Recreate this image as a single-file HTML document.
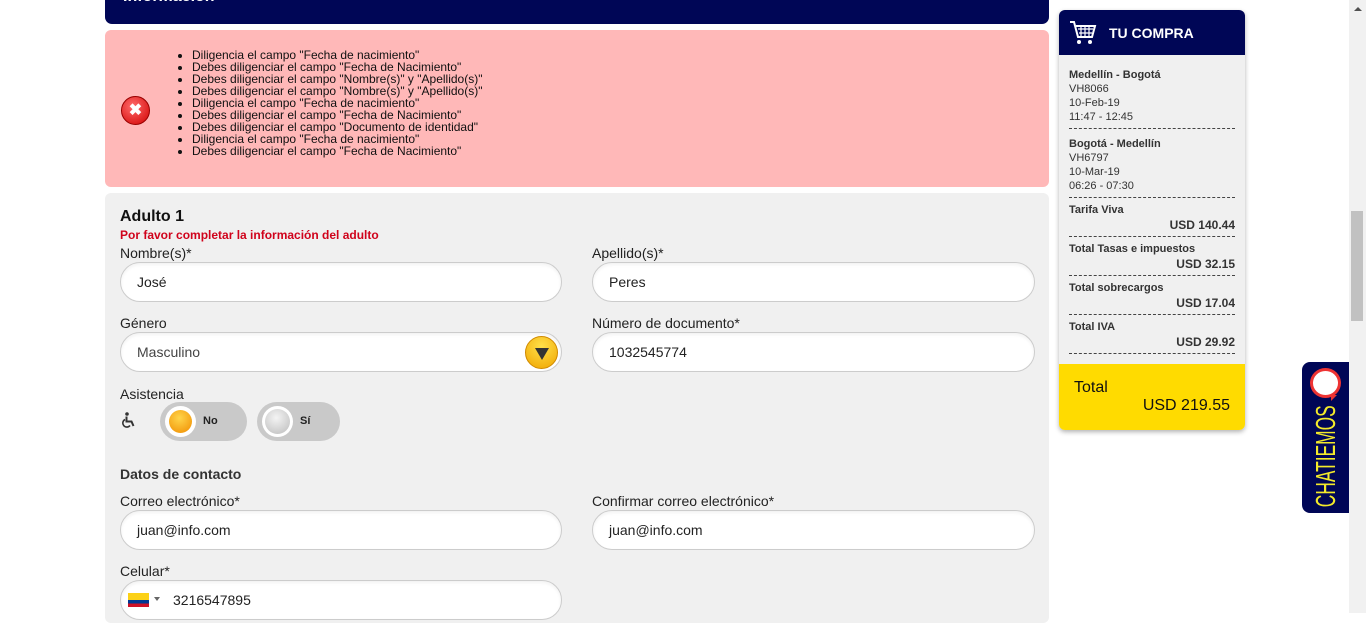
<!DOCTYPE html>
<html><head><meta charset="utf-8"><style>
*{box-sizing:border-box;margin:0;padding:0}
body{width:1366px;height:613px;overflow:hidden;background:#fff;font-family:"Liberation Sans",Arial,sans-serif;position:relative;color:#222}
.abs{position:absolute}
.hdr{left:105px;top:-10px;width:944px;height:34px;background:#000656;border-radius:0 0 7px 7px}
.err{left:105px;top:30px;width:944px;height:157px;background:#ffb8b8;border-radius:6px}
.err ul{position:absolute;left:87px;top:19px;font-size:12px;line-height:12px;color:#111}
.panel{left:105px;top:193px;width:944px;height:430px;background:#f0f0f0;border-radius:6px}
.lbl{font-size:14px;color:#222}
.inp{height:40px;border:1px solid #ccc;border-radius:20px;background:#fff;font-size:14px;line-height:38px;padding-left:16px;color:#222;box-shadow:inset 0 2px 3px rgba(0,0,0,.05)}
.side{left:1059px;top:10px;width:186px;height:420px;background:#f0f0f0;border-radius:6px;box-shadow:0 2px 5px rgba(0,0,0,.3);overflow:hidden}
.side .top{height:45px;background:#000656;color:#fff;font-weight:bold;font-size:14px}
.it{position:absolute;left:10px;width:166px;font-size:11px;color:#333;border-bottom:1px dashed #444}
.it b{color:#333}
.tog{height:39px;border-radius:20px;background:#c9c9c9}
</style></head><body>
<div class="abs hdr"><div class="abs" style="left:18px;top:0;color:#fff;font-weight:bold;font-size:16px;line-height:14px">Información</div></div>
<div class="abs err">
<div class="abs" style="left:16px;top:66px;width:29px;height:29px;border-radius:50%;background:radial-gradient(circle at 40% 35%,#ff6b6b,#d10000);border:1px solid #900;color:#fff;font-weight:bold;font-size:16px;text-align:center;line-height:27px">✖</div>
<ul>
<li>Diligencia el campo "Fecha de nacimiento"</li>
<li>Debes diligenciar el campo "Fecha de Nacimiento"</li>
<li>Debes diligenciar el campo "Nombre(s)" y "Apellido(s)"</li>
<li>Debes diligenciar el campo "Nombre(s)" y "Apellido(s)"</li>
<li>Diligencia el campo "Fecha de nacimiento"</li>
<li>Debes diligenciar el campo "Fecha de Nacimiento"</li>
<li>Debes diligenciar el campo "Documento de identidad"</li>
<li>Diligencia el campo "Fecha de nacimiento"</li>
<li>Debes diligenciar el campo "Fecha de Nacimiento"</li>
</ul></div>
<div class="abs panel"></div>
<div class="abs" style="left:120px;top:208px;font-size:16px;font-weight:bold;color:#111">Adulto 1</div>
<div class="abs" style="left:120px;top:228px;font-size:12px;font-weight:bold;color:#d0021b">Por favor completar la información del adulto</div>
<div class="abs lbl" style="left:120px;top:245px">Nombre(s)*</div>
<div class="abs lbl" style="left:592px;top:245px">Apellido(s)*</div>
<div class="abs inp" style="left:120px;top:262px;width:442px">José</div>
<div class="abs inp" style="left:592px;top:262px;width:443px">Peres</div>
<div class="abs lbl" style="left:120px;top:315px">Género</div>
<div class="abs lbl" style="left:592px;top:315px">Número de documento*</div>
<div class="abs inp" style="left:120px;top:332px;width:442px;color:#444">Masculino</div>
<div class="abs" style="left:525px;top:336px;width:33px;height:33px;border-radius:50%;background:radial-gradient(circle at 50% 30%,#ffe04a,#f0a500);border:1px solid #d08a00"><div class="abs" style="left:9px;top:11px;width:0;height:0;border-left:7px solid transparent;border-right:7px solid transparent;border-top:12px solid #333"></div></div>
<div class="abs inp" style="left:592px;top:332px;width:443px">1032545774</div>
<div class="abs lbl" style="left:120px;top:386px">Asistencia</div>
<svg class="abs" style="left:122px;top:412px" width="14" height="16" viewBox="0 0 14 16"><circle cx="5" cy="2" r="1.8" fill="#333"/><path d="M4.5 4.5v5h5l2 4.5" stroke="#333" stroke-width="2" fill="none"/><path d="M3 7.5a4 4 0 1 0 5 6" stroke="#333" stroke-width="1.6" fill="none"/></svg>
<div class="abs tog" style="left:160px;top:402px;width:87px"><div class="abs" style="left:5px;top:4px;width:31px;height:31px;border-radius:50%;background:#fff"><div class="abs" style="left:4px;top:4px;width:23px;height:23px;border-radius:50%;background:radial-gradient(circle at 45% 35%,#ffd54a,#f08c00)"></div></div><div class="abs" style="left:43px;top:13px;font-size:11px;font-weight:bold">No</div></div>
<div class="abs tog" style="left:257px;top:402px;width:83px"><div class="abs" style="left:5px;top:4px;width:31px;height:31px;border-radius:50%;background:#fff"><div class="abs" style="left:3px;top:3px;width:25px;height:25px;border-radius:50%;background:radial-gradient(circle at 45% 35%,#f4f4f4,#bbb)"></div></div><div class="abs" style="left:43px;top:13px;font-size:11px;font-weight:bold">Sí</div></div>
<div class="abs" style="left:120px;top:466px;font-size:14px;font-weight:bold;color:#333">Datos de contacto</div>
<div class="abs lbl" style="left:120px;top:493px">Correo electrónico*</div>
<div class="abs lbl" style="left:592px;top:493px">Confirmar correo electrónico*</div>
<div class="abs inp" style="left:120px;top:510px;width:442px">juan@info.com</div>
<div class="abs inp" style="left:592px;top:510px;width:443px">juan@info.com</div>
<div class="abs lbl" style="left:120px;top:563px">Celular*</div>
<div class="abs inp" style="left:120px;top:580px;width:442px;padding-left:52px">3216547895</div>
<div class="abs" style="left:128px;top:593px;width:21px;height:14px;background:linear-gradient(#fcd116 0 50%,#003893 50% 75%,#ce1126 75%)"></div>
<div class="abs" style="left:154px;top:597px;border-left:3px solid transparent;border-right:3px solid transparent;border-top:4px solid #666"></div>

<div class="abs side">
<div class="top"><svg class="abs" style="left:10px;top:9px" width="28" height="28" viewBox="0 0 28 28"><path d="M1 3h4l4 15h14l3-11H7" stroke="#fff" stroke-width="2" fill="none"/><path d="M9 10h15M10 14h13M12 7v11M16 7v11M20 7v11" stroke="#fff" stroke-width="1.2"/><circle cx="10" cy="23" r="2" fill="#fff"/><circle cx="21" cy="23" r="2" fill="#fff"/></svg><div class="abs" style="left:50px;top:15px">TU COMPRA</div></div>
<div class="it" style="top:58px;height:61px;line-height:14px"><b>Medellín - Bogotá</b><br>VH8066<br>10-Feb-19<br>11:47 - 12:45</div>
<div class="it" style="top:127px;height:61px;line-height:14px"><b>Bogotá - Medellín</b><br>VH6797<br>10-Mar-19<br>06:26 - 07:30</div>
<div class="it" style="top:194px;height:33px"><b>Tarifa Viva</b><div style="text-align:right;font-weight:bold;font-size:12px;margin-top:2px">USD 140.44</div></div>
<div class="it" style="top:233px;height:33px"><b>Total Tasas e impuestos</b><div style="text-align:right;font-weight:bold;font-size:12px;margin-top:2px">USD 32.15</div></div>
<div class="it" style="top:272px;height:33px"><b>Total sobrecargos</b><div style="text-align:right;font-weight:bold;font-size:12px;margin-top:2px">USD 17.04</div></div>
<div class="it" style="top:311px;height:33px"><b>Total IVA</b><div style="text-align:right;font-weight:bold;font-size:12px;margin-top:2px">USD 29.92</div></div>
<div class="abs" style="left:0;top:354px;width:186px;height:66px;background:#ffdb00"><div class="abs" style="left:15px;top:15px;font-size:16px;color:#111">Total</div><div class="abs" style="right:15px;top:33px;font-size:16px;color:#111">USD 219.55</div></div>
</div>

<div class="abs" style="left:1302px;top:362px;width:48px;height:151px;background:#000656;border-radius:8px 0 0 8px;overflow:hidden">
<div class="abs" style="left:8px;top:6px;width:31px;height:30px;border-radius:50%;background:#fff;border:3px solid #e33"></div>
<div class="abs" style="left:29px;top:33px;width:0;height:0;border-left:6px solid #e33;border-bottom:6px solid transparent"></div>
<div class="abs" style="left:-36px;top:93px;width:120px;height:30px;line-height:30px;transform:rotate(-90deg) scaleX(0.62);color:#f4ea2a;font-size:28px;text-align:center">CHATIEMOS</div></div>
<div class="abs" style="left:1349px;top:0;width:17px;height:613px;background:#f1f1f1"><div class="abs" style="left:2px;top:211px;width:12px;height:110px;background:#c1c1c1"></div><div class="abs" style="left:5px;top:7px;border-left:4px solid transparent;border-right:4px solid transparent;border-bottom:4px solid #505050"></div></div>
</body></html>
